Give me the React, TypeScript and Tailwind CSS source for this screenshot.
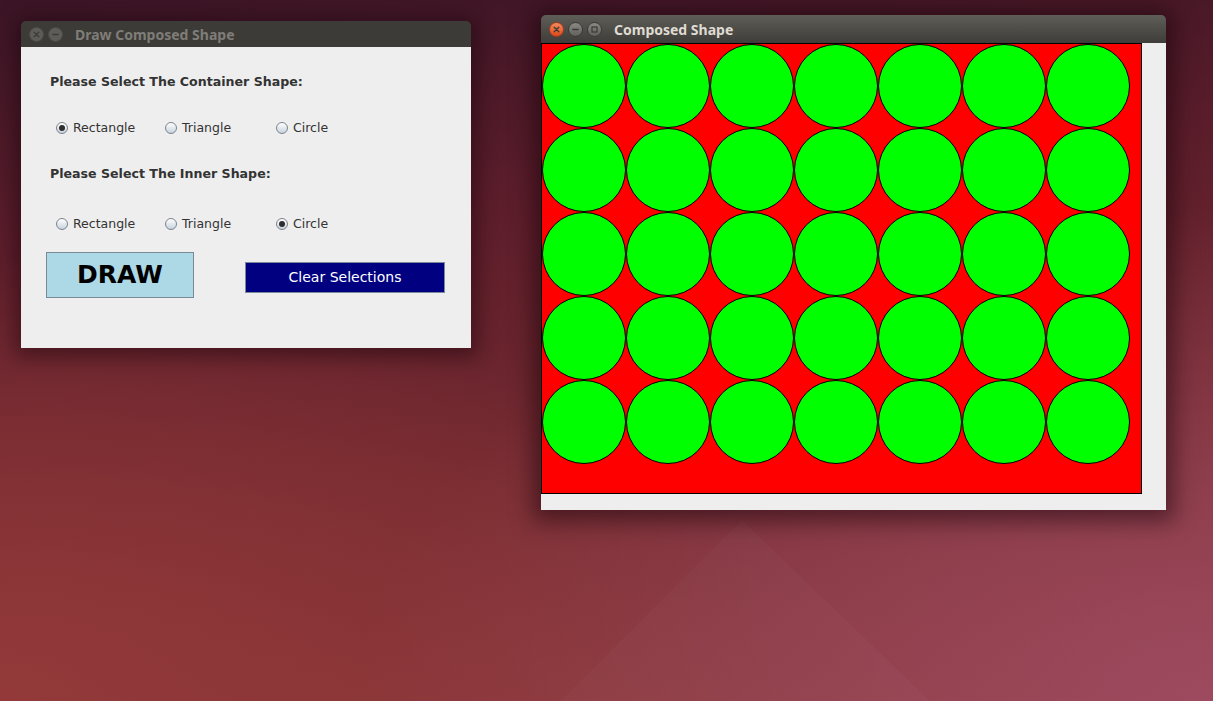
import React, { useState } from "react";

// Types
type RadioProps = {
	label: string;
	checked: boolean;
	onSelect: () => void;
	width: string;
};

type TitleButtonProps = {
	kind: "close" | "min" | "max";
	focused: boolean;
};

const SWING = { fontFamily: '"DejaVu Sans", "Liberation Sans", sans-serif' };
const TITLE = { fontFamily: '"Noto Sans", "DejaVu Sans", sans-serif' };

const ROWS = [0, 1, 2, 3, 4];
const COLS = [0, 1, 2, 3, 4, 5, 6];

const Radio = (props: RadioProps) => {
	const { label, checked, onSelect, width } = props;
	return (
		<button onClick={onSelect} className={`flex items-center gap-[5px] ${width}`}>
			<span className="flex h-[12px] w-[12px] items-center justify-center rounded-full border border-[#7c838d] bg-gradient-to-b from-white to-[#c9d2de]">
				{checked && <span className="h-[6px] w-[6px] rounded-full bg-[#2e2e2e]" />}
			</span>
			<span className="text-[12.5px] leading-4 text-[#333333]">{label}</span>
		</button>
	);
};

const TitleButton = (props: TitleButtonProps) => {
	const { kind, focused } = props;
	const isClose = kind === "close";
	const face = isClose && focused
		? "bg-gradient-to-b from-[#f38a5c] to-[#dd4814] border-[#a8391a]"
		: focused
		? "bg-gradient-to-b from-[#8b8983] to-[#63615c] border-[#3a3935]"
		: "bg-[#5d5c58] border-[#4a4945]";
	const glyph = focused ? "#3a3935" : "#3c3b37";
	return (
		<span className={`flex h-[15px] w-[15px] items-center justify-center rounded-full border ${face}`}>
			<svg width="9" height="9" viewBox="0 0 9 9">
				{kind === "close" && (
					<path d="M2.2 2.2 L6.8 6.8 M6.8 2.2 L2.2 6.8" stroke={glyph} strokeWidth="1.3" strokeLinecap="round" />
				)}
				{kind === "min" && <path d="M1.8 4.5 H7.2" stroke={glyph} strokeWidth="1.3" strokeLinecap="round" />}
				{kind === "max" && <rect x="2" y="2" width="5" height="5" fill="none" stroke={glyph} strokeWidth="1.2" />}
			</svg>
		</span>
	);
};

const DrawDialog = () => {
	const [outer, setOuter] = useState<string>("Rectangle");
	const [inner, setInner] = useState<string>("Circle");
	const options = ["Rectangle", "Triangle", "Circle"];
	const widths = ["w-[109px]", "w-[111px]", "w-[80px]"];

	return (
		<div className="absolute left-[21px] top-[21px] w-[450px] rounded-t-[5px] shadow-[0_3px_20px_6px_rgba(20,0,8,0.45)]">
			{/* <TitleBar> */}
			<div className="flex h-[26px] items-center rounded-t-[5px] bg-[#3c3b37] pl-[8px]" style={TITLE}>
				<div className="flex gap-[4px]">
					<TitleButton kind="close" focused={false} />
					<TitleButton kind="min" focused={false} />
				</div>
				<span className="ml-[12px] text-[14px] font-bold text-[#7f7d78]">Draw Composed Shape</span>
			</div>

			{/* <Body> */}
			<div className="h-[301px] bg-[#eeeeee] pt-[27px]" style={SWING}>
				<p className="ml-[29px] h-4 text-[12.6px] font-bold leading-4 text-[#333333]">
					Please Select The Container Shape:
				</p>
				<div className="ml-[35px] mt-[30px] flex h-4 items-center">
					{options.map((o, i) => (
						<Radio key={o} label={o} width={widths[i]} checked={outer === o} onSelect={() => setOuter(o)} />
					))}
				</div>
				<p className="ml-[29px] mt-[30px] h-4 text-[12.6px] font-bold leading-4 text-[#333333]">
					Please Select The Inner Shape:
				</p>
				<div className="ml-[35px] mt-[34px] flex h-4 items-center">
					{options.map((o, i) => (
						<Radio key={o} label={o} width={widths[i]} checked={inner === o} onSelect={() => setInner(o)} />
					))}
				</div>
				<div className="mt-[20px] flex items-start">
					<button className="ml-[25px] h-[46px] w-[148px] border border-[#7a8a99] bg-[#add8e6] text-[25px] font-bold text-black">
						DRAW
					</button>
					<button
						onClick={() => {
							setOuter("");
							setInner("");
						}}
						className="ml-[51px] mt-[10px] h-[31px] w-[200px] border border-[#7a8a99] bg-[#000080] text-[14px] text-white"
					>
						Clear Selections
					</button>
				</div>
			</div>
		</div>
	);
};

const ShapeWindow = () => {
	return (
		<div className="absolute left-[541px] top-[15px] w-[625px] rounded-t-[5px] shadow-[0_3px_22px_8px_rgba(20,0,8,0.5)]">
			{/* <TitleBar> */}
			<div
				className="flex h-[28px] items-center rounded-t-[5px] bg-gradient-to-b from-[#5f5d57] to-[#3e3d39] pl-[8px]"
				style={TITLE}
			>
				<div className="flex gap-[4px]">
					<TitleButton kind="close" focused={true} />
					<TitleButton kind="min" focused={true} />
					<TitleButton kind="max" focused={true} />
				</div>
				<span className="ml-[12px] text-[14px] font-bold text-[#dfdbd2]">Composed Shape</span>
			</div>

			{/* <Canvas> */}
			<div className="h-[467px] bg-[#eeeeee]">
				<svg width="602" height="452" viewBox="0 0 602 452">
					<rect x="0.5" y="0.5" width="600" height="450" fill="#ff0000" stroke="#000" strokeWidth="1" />
					{ROWS.map((r) =>
						COLS.map((c) => (
							<circle
								key={`${r}-${c}`}
								cx={43 + c * 84}
								cy={43 + r * 84}
								r="41.5"
								fill="#00ff00"
								stroke="#000"
								strokeWidth="1"
							/>
						))
					)}
				</svg>
			</div>
		</div>
	);
};

const App = () => {
	return (
		<div className="relative h-[701px] w-[1213px] overflow-hidden bg-[radial-gradient(ellipse_at_100%_100%,#9d4a60_0%,rgba(157,74,96,0)_50%),radial-gradient(ellipse_at_0%_100%,#93393a_0%,rgba(147,57,58,0)_45%),linear-gradient(175deg,#3b1526_0%,#5c1d2b_30%,#742a30_65%,#8a3737_100%)]">
			{/* <Wallpaper> */}
			<svg className="absolute inset-0" width="1213" height="701" viewBox="0 0 1213 701">
				<polygon points="742,520 560,701 930,701" fill="#ffffff" fillOpacity="0.025" />
			</svg>

			<DrawDialog />
			<ShapeWindow />
		</div>
	);
};

export default App;
